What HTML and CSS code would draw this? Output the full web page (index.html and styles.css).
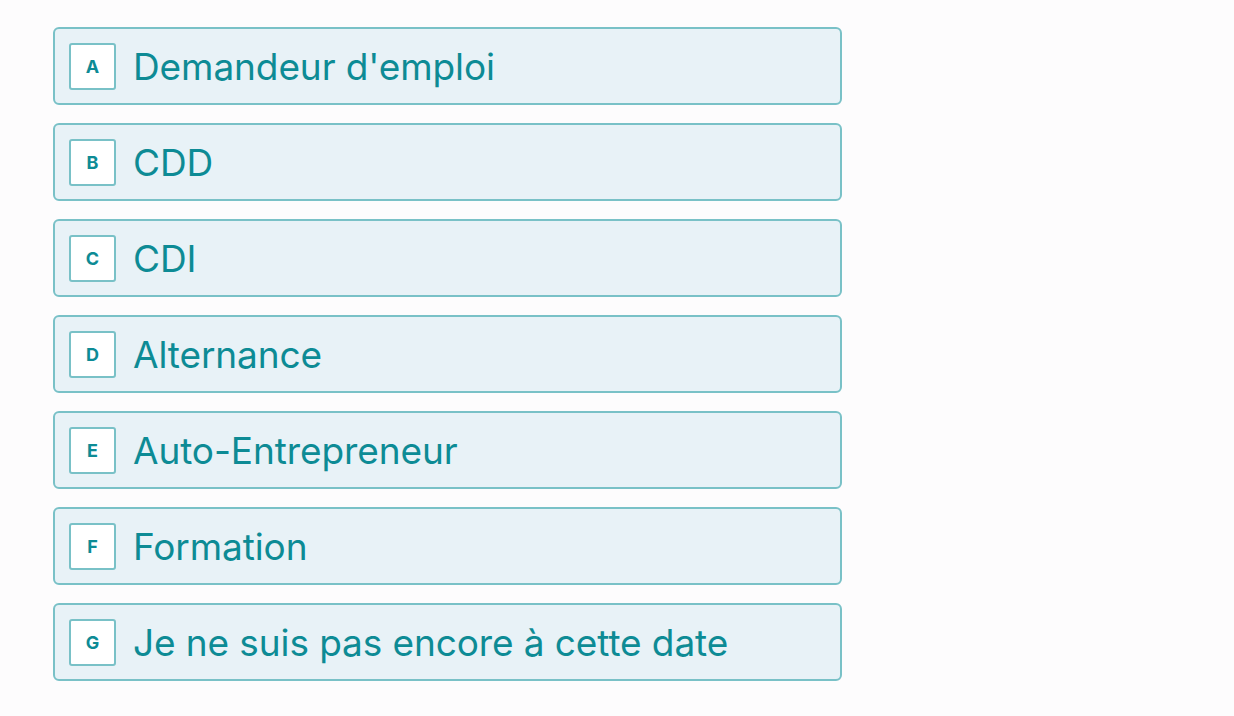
FILE: index.html
```html
<!DOCTYPE html>
<html lang="fr">
<head>
  <meta charset="UTF-8" />
  <title>Situation</title>
  <link rel="stylesheet" href="styles.css">
</head>
<body>

<!-- liste des choix -->
<div class="choices">
  <div class="choice"><span class="key">A</span><span class="label">Demandeur d'emploi</span></div>
  <div class="choice"><span class="key">B</span><span class="label">CDD</span></div>
  <div class="choice"><span class="key">C</span><span class="label">CDI</span></div>
  <div class="choice"><span class="key">D</span><span class="label">Alternance</span></div>
  <div class="choice"><span class="key">E</span><span class="label">Auto-Entrepreneur</span></div>
  <div class="choice"><span class="key">F</span><span class="label">Formation</span></div>
  <div class="choice"><span class="key">G</span><span class="label">Je ne suis pas encore à cette date</span></div>
</div>

</body>
</html>
```

FILE: styles.css
```css
body {
  font-family: Inter, "Liberation Sans", Arial, sans-serif;
  background: #fdfcfd;
  margin: 0;
  padding: 27px 0 0 53px;
}
.choices {
  display: flex;
  flex-direction: column;
  gap: 18px;
  width: 789px;
}
.choice {
  display: flex;
  align-items: center;
  gap: 17px;
  box-sizing: border-box;
  height: 78px;
  padding: 0 14px;
  background: #e8f2f7;
  border: 2px solid #79c1c7;
  border-radius: 6px;
  color: #0d8b95;
}
.key {
  display: flex;
  align-items: center;
  justify-content: center;
  box-sizing: border-box;
  width: 47px;
  height: 47px;
  background: #fff;
  border: 2px solid #79c1c7;
  border-radius: 3px;
  font-size: 18px;
  font-weight: bold;
}
.label {
  font-size: 37px;
  line-height: 1;
  letter-spacing: -0.1px;
}
```
